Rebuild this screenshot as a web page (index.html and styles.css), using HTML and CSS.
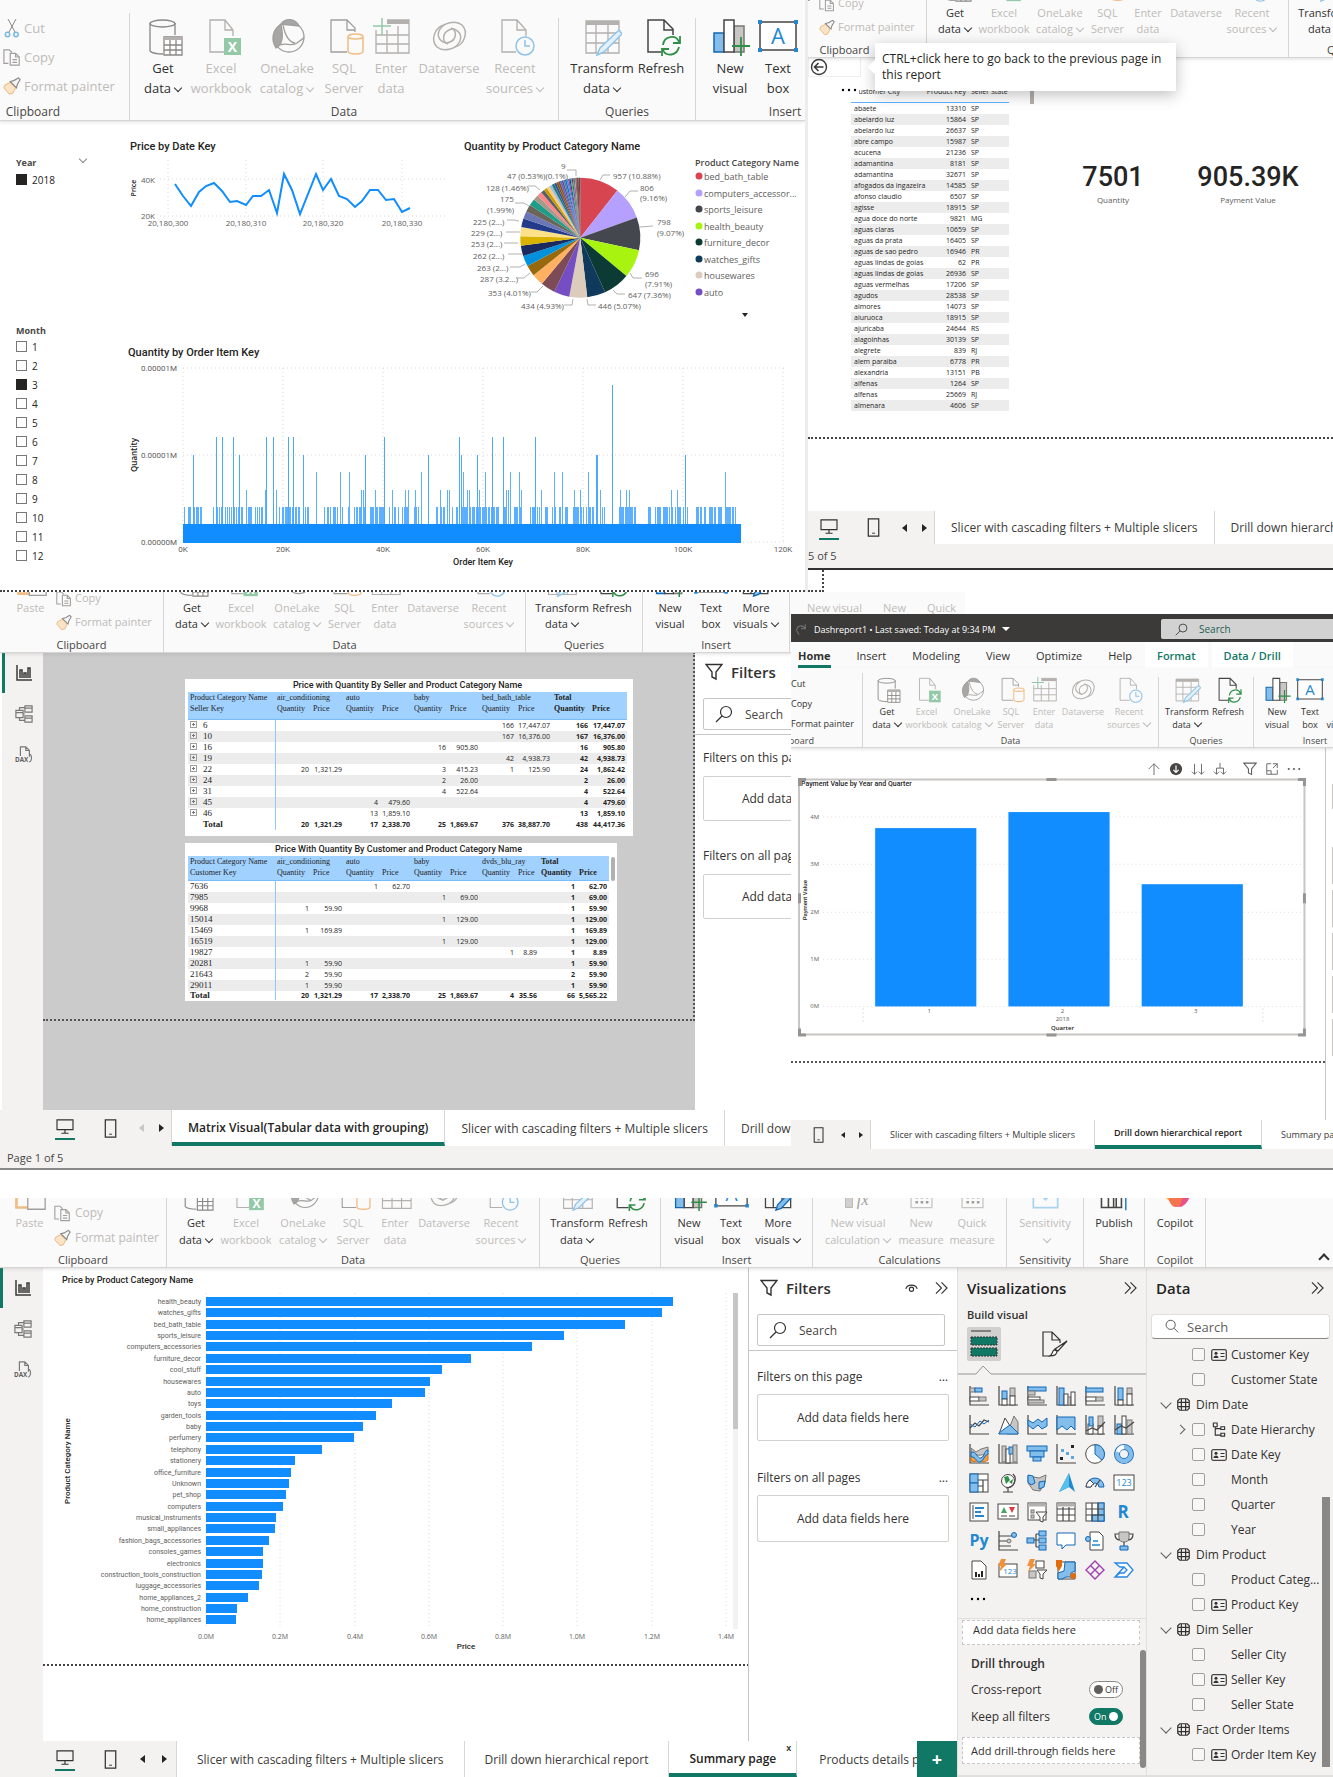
FILE: index.html
```html
<!DOCTYPE html>
<html lang="en">
<head>
<meta charset="utf-8">
<meta name="viewport" content="width=device-width, initial-scale=1">
<title>Dashreport1</title>
<link rel="stylesheet" href="styles.css">
</head>
<body>
<svg class="sprite" aria-hidden="true">
  <symbol id="i-cut" viewBox="0 0 16 20"><g fill="none" stroke="#8a8886"><path d="M4 1l7 13M12 1L5 14"/><g stroke="#7cb8e0" stroke-width="1.500"><circle cx="3.500" cy="16.500" r="2.200"/><circle cx="12" cy="16.500" r="2.200"/></g></g></symbol>
  <symbol id="i-copy" viewBox="0 0 20 20"><g fill="#fafafa" stroke="#a19f9d" stroke-width="1.300"><path d="M6 17H1V2h6l3 3"/><path d="M8 6h6l4 4v9H8zM14 6v4h4M10.500 13h5M10.500 16h5" /></g></symbol>
  <symbol id="i-brush" viewBox="0 0 20 20"><path d="M2 9l6-3 6 6-3 6-4 1L1 12z" fill="#fbe3c8" stroke="#e9b06f"/><path d="M8 5l4-1 5-3 2 2-3 5-1 4z" fill="#f6f6f6" stroke="#8a8886" stroke-width="1.300"/></symbol>
  <symbol id="i-paste" viewBox="-2 0 40 38"><path d="M3 4h26v30H3z" fill="none" stroke="#f0bd84" stroke-width="3"/><path d="M16 14h20v22H16z" fill="#fafafa" stroke="#a19f9d" stroke-width="1.500"/></symbol>
  <symbol id="i-get" viewBox="-2 0 40 38"><g fill="none" stroke="#8a8886" stroke-width="1.300"><path d="M5 5v28c2 2 8 3 13 3M30 5v12"/><ellipse cx="17.500" cy="5.500" rx="12.500" ry="3.500"/><path d="M19 19h18v18H19z" fill="#fff"/><path d="M19 20.500h18" stroke-width="3" stroke="#b3b0ad"/><path d="M25 22v15M31 22v15M19 27h18M19 32h18"/></g></symbol>
  <symbol id="i-excel" viewBox="-2 0 40 38"><path d="M30 18v-6L22 2H7v32h14M22 2v10h8" fill="none" stroke="#b3b0ad" stroke-width="1.300"/><path d="M21 20h17v17H21z" fill="#93c9a7"/><text x="29.500" y="34" text-anchor="middle" font-size="14" font-weight="700" fill="#fff">X</text></symbol>
  <symbol id="i-lake" viewBox="-2 0 40 38"><g fill="none" stroke="#a19f9d" stroke-width="1.300"><circle cx="20" cy="19" r="15"/><path d="M11 7C3 13 2 22 7 30c6-3 8-10 5-23z" fill="#a8a6a4"/><path d="M12 6c4-6 14-6 18 2-6-1-12-1-18-2z" fill="#a8a6a4"/><path d="M14 7c2 10 6 17 12 18M7 29c8-7 15 1 21-4 3-3 6-3 7-6"/></g></symbol>
  <symbol id="i-sql" viewBox="-2 0 40 38"><path d="M29 14v-4L21 2H5v32h16M21 2v10h8" fill="none" stroke="#a19f9d" stroke-width="1.300"/><g fill="#fafafa" stroke="#f0bd84" stroke-width="1.500"><path d="M22 19v14c0 4 15 4 15 0V19"/><ellipse cx="29.500" cy="18.500" rx="7.500" ry="2.500"/></g></symbol>
  <symbol id="i-enter" viewBox="-2 0 40 38"><g fill="none" stroke="#b3b0ad" stroke-width="1.300"><path d="M3 12v23h33V2H14M3 26h33M3 17h33M14 12v23M25 8v27"/><path d="M14 4h22" stroke-width="4"/></g><path d="M9 0v17M0 8h18" stroke="#93c9a7" stroke-width="1.500"/></symbol>
  <symbol id="i-verse" viewBox="-2 0 40 38"><g fill="none" stroke="#b3b0ad" stroke-width="1.500"><path d="M13 7C4 9-1 22 6 29c6 5 19 3 23-6 3-8-5-14-11-11-7 3-7 12-1 14"/><path d="M24 29c9-2 14-15 7-22-6-5-19-3-23 6-3 8 5 14 11 11 7-3 7-12 1-14"/></g></symbol>
  <symbol id="i-recent" viewBox="-2 0 40 38"><path d="M29 18v-6L20 2H5v32h14M20 2v10h9" fill="none" stroke="#b3b0ad" stroke-width="1.300"/><g fill="#fafafa" stroke="#8fc4e8" stroke-width="1.500"><circle cx="28" cy="28" r="9"/><path d="M28 22v6h5"/></g></symbol>
  <symbol id="i-transform" viewBox="-2 0 40 38"><g fill="none" stroke="#b3b0ad" stroke-width="1.300"><path d="M2 3h33v32H2zM2 15h33M2 25h33M12 7v28M24 7v28"/><path d="M2 5h33" stroke-width="4"/></g><path d="M35 12l3 4-18 18-7 3 3-7z" fill="#e3f0fa" stroke="#8fc4e8" stroke-width="1.500"/></symbol>
  <symbol id="i-refresh" viewBox="-2 0 40 38"><path d="M30 17v-6L21 2H5v32h13M21 2v10h9" fill="none" stroke="#484644" stroke-width="1.500"/><g fill="none" stroke="#2f8f46" stroke-width="1.800"><path d="M20 27c1-9 13-11 16-3M37 18v7h-7M36 29c-2 9-13 10-16 3M19 38v-7h7"/></g></symbol>
  <symbol id="i-newvis" viewBox="-2 0 40 38"><path d="M2 15h10v19H2z" fill="#83bdeb" stroke="#1267b4" stroke-width="1.500"/><path d="M22 8h10v26H22z" fill="#c8c6c4" stroke="#797775" stroke-width="1.500"/><path d="M12 2h10v32H12z" fill="#fff" stroke="#484644" stroke-width="1.500"/><path d="M29 19v19M20 28h18" stroke="#2f8f46" stroke-width="1.800"/></symbol>
  <symbol id="i-textbox" viewBox="-2 0 40 38"><path d="M0 4h36v28H0z" fill="#fff" stroke="#484644" stroke-width="1.500"/><path d="M-2 2h4v4h-4zM34 2h4v4h-4zM-2 30h4v4h-4zM34 30h4v4h-4z" fill="#2488d0"/><text x="18" y="26" text-anchor="middle" font-size="22" fill="#2488d0">A</text></symbol>
  <symbol id="i-more" viewBox="-2 0 40 38"><g fill="none" stroke="#484644" stroke-width="1.500"><path d="M3 14h9v20H3zM12 2h10v32H12zM22 8h10v26H22z"/></g><path d="M33 14l4 4-16 17-6 2 2-6z" fill="#83bdeb" stroke="#1267b4" stroke-width="1.500"/></symbol>
  <symbol id="i-calc" viewBox="-2 0 40 38"><path d="M3 8h8v26H3z" fill="#d2d0ce" stroke="#b3b0ad"/><text x="16" y="31" font-size="19" font-style="italic" font-family="Liberation Serif, serif" fill="#a19f9d">fx</text></symbol>
  <symbol id="i-measure" viewBox="-2 0 40 38"><path d="M6 4h24v30H6z" fill="none" stroke="#c8c6c4" stroke-width="1.500"/><path d="M6 10h24" stroke="#c8c6c4" stroke-width="4"/><path d="M11 22h3M17 22h3M23 22h3M11 28h3M17 28h3M23 28h3" stroke="#a19f9d" stroke-width="3"/></symbol>
  <symbol id="i-sens" viewBox="-2 0 40 38"><path d="M4 6h28v28H4z" fill="none" stroke="#a9d3ef" stroke-width="2"/><path d="M11 18l7 7 7-7" fill="none" stroke="#a9d3ef" stroke-width="2"/></symbol>
  <symbol id="i-publish" viewBox="-2 0 40 38"><path d="M3 8v26h24M11 34V18h6v16M20 34V10h6v24" fill="none" stroke="#484644" stroke-width="1.800"/><path d="M31 37V14M25 21l6-7 6 7" fill="none" stroke="#2488d0" stroke-width="1.800"/></symbol>
  <symbol id="i-copilot" viewBox="-2 0 40 38"><path d="M0 6h11l8 18c2 4 0 6-3 5C8 27 2 18 0 6z" fill="#f6c13e"/><path d="M20 6h17c1 12-5 24-12 27h-9c6-2 6-8 5-14z" fill="#e8508c"/><path d="M9 20h18l-3 10c-1 3-4 3-8 3-4-2-6-8-7-13z" fill="#f5734f"/></symbol>
  <symbol id="i-report" viewBox="0 0 18 18"><path d="M2 1v15h15M5 14V6h2v8M9 14V9h2v5M13 14V4h2v10" fill="none" stroke="#3b3a39" stroke-width="1.500"/></symbol>
  <symbol id="i-model" viewBox="0 0 20 20"><path d="M11 1h8v7h-8zM11 12h8v7h-8zM1 6h8v8H1zM11 3.500h8M11 14.500h8M1 8.500h8M9 10h2M5 6V3h6M5 14v3h6" fill="none" stroke="#7a7876" stroke-width="1.300"/></symbol>
  <symbol id="i-dax" viewBox="0 0 20 20"><path d="M6 11V1h6l4 4v7M12 1v4h4M17 9c2 3 2 7-1 9" fill="none" stroke="#7a7876" stroke-width="1.300"/><text x="0" y="18" font-size="7" font-weight="700" fill="#605e5c">DAX</text></symbol>
  <symbol id="i-monitor" viewBox="0 0 20 18"><path d="M1 1h18v11H1zM10 12v4M6 16h8" fill="none" stroke="#323130" stroke-width="1.300"/></symbol>
  <symbol id="i-phone" viewBox="0 0 14 20"><path d="M1 1h11v18H1z" fill="none" stroke="#323130" stroke-width="1.300"/><path d="M5 16h3" stroke="#323130"/></symbol>
  <symbol id="i-funnel" viewBox="0 0 18 18"><path d="M1 1.500h16l-6 7.500v7l-4-2V9z" fill="none" stroke="currentColor" stroke-width="1.400"/></symbol>
  <symbol id="i-search" viewBox="0 0 18 18"><circle cx="11" cy="7" r="5.500" fill="none" stroke="currentColor" stroke-width="1.200"/><path d="M7 11l-6 6" stroke="currentColor" stroke-width="1.200"/></symbol>
  <symbol id="i-searchr" viewBox="0 0 18 18"><circle cx="8" cy="7" r="5.500" fill="none" stroke="currentColor" stroke-width="1.200"/><path d="M12 11l5 5" stroke="currentColor" stroke-width="1.200"/></symbol>
  <symbol id="i-eye" viewBox="0 0 16 12"><path d="M1 7C3 1 13 1 15 7" fill="none" stroke="#323130" stroke-width="1.400"/><circle cx="8" cy="7.500" r="2.600" fill="none" stroke="#323130" stroke-width="1.400"/></symbol>
  <symbol id="i-dbl" viewBox="0 0 14 14"><path d="M1 1l6 6-6 6M7 1l6 6-6 6" fill="none" stroke="#323130" stroke-width="1.200"/></symbol>
  <symbol id="i-back" viewBox="0 0 18 18"><circle cx="9" cy="9" r="7.500" fill="none" stroke="#3b3a39" stroke-width="1.400"/><path d="M13.500 9H5M8.500 5L4.500 9l4 4" fill="none" stroke="#3b3a39" stroke-width="1.600"/></symbol>
  <symbol id="i-redo" viewBox="0 0 14 14"><path d="M12 1v5H7M12 6C9 1 2 2 2 8c0 2 1 3 3 5" fill="none" stroke="#777573" stroke-width="1.200"/></symbol>
  <symbol id="i-up" viewBox="0 0 16 16"><path d="M8 15V2M2 8l6-6 6 6" fill="none" stroke="#605e5c"/></symbol>
  <symbol id="i-down" viewBox="0 0 16 16"><circle cx="8" cy="8" r="7" fill="#484644"/><path d="M8 4v8M5 9l3 3 3-3" fill="none" stroke="#fff" stroke-width="1.400"/></symbol>
  <symbol id="i-downs" viewBox="0 0 16 16"><path d="M4 2v12M1 11l3 3 3-3M12 2v12M9 11l3 3 3-3" fill="none" stroke="#605e5c"/></symbol>
  <symbol id="i-split" viewBox="0 0 16 16"><path d="M8 1v6M4 14V7h8v7M1 11l3 3 3-3M9 11l3 3 3-3" fill="none" stroke="#605e5c"/></symbol>
  <symbol id="i-focus" viewBox="0 0 16 16"><path d="M7 2H2v12h12V9M2 10h5v4M9 2h5v5M14 2L9 7" fill="none" stroke="#605e5c"/></symbol>
  <symbol id="i-dots" viewBox="0 0 16 4"><circle cx="2" cy="2" r="1.200"/><circle cx="8" cy="2" r="1.200"/><circle cx="14" cy="2" r="1.200"/></symbol>
  <symbol id="i-card" viewBox="0 0 16 12"><rect x=".7" y=".7" width="14.600" height="10.600" rx="1.500" fill="none" stroke="#484644" stroke-width="1.300"/><circle cx="5" cy="4.300" r="1.500" fill="#323130"/><path d="M2.500 9c0-3.500 5-3.500 5 0z" fill="#323130"/><path d="M9.500 4.500h4M9.500 7.500h4" stroke="#323130" stroke-width="1.200"/></symbol>
  <symbol id="i-table" viewBox="0 0 14 14"><path d="M3 .8h8L13.200 3v8L11 13.200H3L.8 11V3zM4.700 1v12M9.300 1v12M1 4.700h12M1 9.300h12" fill="none" stroke="#323130" stroke-width="1.300"/></symbol>
  <symbol id="i-tree" viewBox="0 0 14 16"><path d="M1 1h4v4H1zM9 5h4v3H9zM9 12h4v3H9zM3 5v9h6M3 7h6" fill="none" stroke="#323130" stroke-width="1.200"/></symbol>
  <symbol id="i-fields" viewBox="0 0 34 34"><path d="M4 4h20" stroke="#323130"/><path d="M4 10h26v8H4zM4 21h26v8H4z" fill="#117865" stroke="#323130" stroke-dasharray="2 1"/></symbol>
  <symbol id="i-page" viewBox="0 0 28 28"><path d="M9 26H2V2h9l8 8v3M11 2v8h8" fill="none" stroke="#323130" stroke-width="1.200"/><path d="M26 11l-9 10-3-2zM16 21c0 4-3 5-7 5 3-2 2-5 4-6z" fill="#fff" stroke="#323130" stroke-width="1.200"/></symbol>
</svg>

<main class="board">
  <div class="row row-top">
    <section class="window" aria-label="Slicers report">
      <div class="ribbon ribbon-lg" data-groups="clipboardAll data queries insert"></div>
      <div class="split slicer-body">
        <aside class="slicers">
          <fieldset class="slicer" data-slicer="Year" data-values="2018" data-picked="2018"></fieldset>
          <fieldset class="slicer slicer-month" data-slicer="Month" data-values="1 2 3 4 5 6 7 8 9 10 11 12" data-picked="3"></fieldset>
        </aside>
        <svg class="chart" id="slicer-charts" viewBox="125 120 680 470" role="img" aria-label="Price, quantity by category and quantity by order item"></svg>
      </div>
    </section>

    <section class="window window-drillthrough" aria-label="Products details report">
      <div class="ribbon ribbon-md ribbon-shifted" data-groups="clipboard data queries"></div>
      <div class="tooltip" role="tooltip">CTRL+click here to go back to the previous page in this report</div>
      <div class="details">
        <button class="back" aria-label="Back"><svg><use href="#i-back"/></svg></button>
        <div class="details-body">
          <button class="visual-dots" aria-label="More options"><svg><use href="#i-dots"/></svg></button>
          <table class="cities" id="cities"><thead><tr><th>Customer City</th><th>Product Key</th><th>Seller State</th></tr></thead><tbody></tbody></table>
          <span class="thumb"></span>
          <div class="kpi"><strong>7501</strong><span>Quantity</span></div>
          <div class="kpi kpi-wide"><strong>905.39K</strong><span>Payment Value</span></div>
        </div>
      </div>
      <div class="blank"></div>
      <nav class="tabs">
        <div class="views views-b"><button aria-label="Desktop layout" class="on"><svg class="mon"><use href="#i-monitor"/></svg></button><button aria-label="Mobile layout"><svg class="pho"><use href="#i-phone"/></svg></button><button class="arrow prev" aria-label="Previous"></button><button class="arrow next" aria-label="Next"></button></div>
        <button class="tab">Slicer with cascading filters + Multiple slicers</button>
        <button class="tab">Drill down hierarchical report</button>
      </nav>
      <div class="status status-cut">5 of 5</div>
      <div class="seam"></div>
    </section>
  </div>

  <div class="row row-mid">
    <section class="window" aria-label="Matrix report">
      <div class="ribbon ribbon-md" data-groups="clipboard data queries insert3"></div>
      <div class="split matrix-body">
        <nav class="rail rail-inset"><button aria-label="Report view" class="on"><svg><use href="#i-report"/></svg></button><button aria-label="Model view"><svg><use href="#i-model"/></svg></button><button aria-label="DAX view"><svg><use href="#i-dax"/></svg></button></nav>
        <div class="grey">
          <div class="grey-page">
            <div class="matrix-card"><h2>Price with Quantity By Seller and Product Category Name</h2><table class="matrix" id="m-seller"></table></div>
            <div class="matrix-card matrix-card-b"><h2>Price With Quantity By Customer and Product Category Name</h2><table class="matrix" id="m-customer"></table><span class="thumb"></span></div>
          </div>
        </div>
        <aside class="filters filters-cut">
          <header><svg class="funnel"><use href="#i-funnel"/></svg><h2>Filters</h2></header>
          <label class="search"><svg><use href="#i-search"/></svg><input type="text" placeholder="Search" aria-label="Search filters"></label>
          <hr>
          <h3>Filters on this page</h3><div class="well">Add data fields here</div>
          <h3>Filters on all pages</h3><div class="well">Add data fields here</div>
        </aside>
      </div>
      <nav class="tabs tabs-tall">
        <div class="views views-c"><button aria-label="Desktop layout" class="on"><svg class="mon"><use href="#i-monitor"/></svg></button><button aria-label="Mobile layout"><svg class="pho"><use href="#i-phone"/></svg></button><button class="arrow prev" disabled aria-label="Previous"></button><button class="arrow next" aria-label="Next"></button></div>
        <button class="tab active">Matrix Visual(Tabular data with grouping)</button>
        <button class="tab">Slicer with cascading filters + Multiple slicers</button>
        <button class="tab">Drill down hierarchical report</button>
      </nav>
      <div class="status">Page 1 of 5</div>
    </section>

    <section class="window" aria-label="Drill down report">
      <div class="sliver"><span>New visual</span><span>New</span><span>Quick</span></div>
      <div class="titlebar"><svg><use href="#i-redo"/></svg><span>Dashreport1 • Last saved: Today at 9:34 PM</span><i class="caret"></i><label class="title-search"><svg><use href="#i-search"/></svg><input type="text" placeholder="Search" aria-label="Search commands"></label></div>
      <nav class="menu"><a href="#home" class="active">Home</a><a href="#insert">Insert</a><a href="#modeling">Modeling</a><a href="#view">View</a><a href="#optimize">Optimize</a><a href="#help">Help</a><a href="#format" class="ctx">Format</a><a href="#drill" class="ctx">Data / Drill</a></nav>
      <div class="ribbon ribbon-sm" data-groups="clipboardOn data queries insert3"></div>
      <div class="split drill-body">
        <div class="drill-canvas">
          <div class="toolbar"><button aria-label="Drill up"><svg><use href="#i-up"/></svg></button><button aria-label="Drill mode"><svg><use href="#i-down"/></svg></button><button aria-label="Next level"><svg><use href="#i-downs"/></svg></button><button aria-label="Expand all"><svg><use href="#i-split"/></svg></button><button aria-label="Filters" class="apart"><svg><use href="#i-funnel"/></svg></button><button aria-label="Focus mode"><svg><use href="#i-focus"/></svg></button><button aria-label="More options"><svg><use href="#i-dots"/></svg></button></div>
          <svg class="chart" id="quarter-chart" viewBox="791 776 533 262" role="img" aria-label="Payment Value by Year and Quarter"></svg>
        </div>
        <aside class="stub"><i class="stub-search"></i><i></i><i></i><i></i><i></i><i></i></aside>
      </div>
      <nav class="tabs tabs-small">
        <div class="views views-d"><button aria-label="Mobile layout"><svg class="pho"><use href="#i-phone"/></svg></button><button class="arrow prev" aria-label="Previous"></button><button class="arrow next" aria-label="Next"></button></div>
        <button class="tab">Slicer with cascading filters + Multiple slicers</button>
        <button class="tab active">Drill down hierarchical report</button>
        <button class="tab">Summary page</button>
      </nav>
      <div class="status status-small"></div>
    </section>
  </div>

  <section class="window row-bottom" aria-label="Summary report">
    <div class="ribbon ribbon-wd" data-groups="clipboard data queries insert3 calc sens share copilot"></div>
    <div class="split summary">
      <div class="summary-left">
        <div class="split summary-main">
          <nav class="rail"><button aria-label="Report view" class="on"><svg><use href="#i-report"/></svg></button><button aria-label="Model view"><svg><use href="#i-model"/></svg></button><button aria-label="DAX view"><svg><use href="#i-dax"/></svg></button></nav>
          <svg class="chart" id="category-chart" viewBox="43 1267 705 472" role="img" aria-label="Price by Product Category Name"></svg>
          <aside class="filters">
            <header><svg class="funnel"><use href="#i-funnel"/></svg><h2>Filters</h2><button class="end" aria-label="Hide"><svg class="eye"><use href="#i-eye"/></svg></button><button aria-label="Collapse"><svg class="dbl"><use href="#i-dbl"/></svg></button></header>
            <label class="search"><svg><use href="#i-search"/></svg><input type="text" placeholder="Search" aria-label="Search filters"></label>
            <hr>
            <h3>Filters on this page<span>…</span></h3><div class="well">Add data fields here</div>
            <h3>Filters on all pages<span>…</span></h3><div class="well">Add data fields here</div>
          </aside>
        </div>
        <nav class="tabs tabs-tall tabs-end">
          <div class="views views-e"><button aria-label="Desktop layout" class="on"><svg class="mon"><use href="#i-monitor"/></svg></button><button aria-label="Mobile layout"><svg class="pho"><use href="#i-phone"/></svg></button><button class="arrow prev" aria-label="Previous"></button><button class="arrow next" aria-label="Next"></button></div>
          <button class="tab">Slicer with cascading filters + Multiple slicers</button>
          <button class="tab">Drill down hierarchical report</button>
          <button class="tab active">Summary page<span class="close">x</span></button>
          <button class="tab last">Products details page</button>
          <button class="add" aria-label="New page">+</button>
        </nav>
      </div>
      <aside class="pane viz">
        <header><h2>Visualizations</h2><button aria-label="Collapse"><svg class="dbl"><use href="#i-dbl"/></svg></button></header>
        <h3>Build visual</h3>
        <div class="modes"><button class="on" aria-label="Build visual"><svg><use href="#i-fields"/></svg></button><button aria-label="Format page"><svg><use href="#i-page"/></svg></button></div>
        <svg class="notch" viewBox="0 0 188 10" preserveAspectRatio="xMinYMin slice" aria-hidden="true"><path d="M0 9h18l7-8 8 8h155" fill="none" stroke="#979593"/></svg>
        <div class="gallery" id="gallery"></div>
        <button class="viz-more" aria-label="More visuals"><svg><use href="#i-dots"/></svg></button>
        <div class="viz-fields">
          <div class="drop">Add data fields here</div>
          <h4>Drill through</h4>
          <div class="option"><span>Cross-report</span><label class="switch"><input type="checkbox" aria-label="Cross-report"><span>Off</span></label></div>
          <div class="option"><span>Keep all filters</span><label class="switch"><input type="checkbox" checked aria-label="Keep all filters"><span>On</span></label></div>
          <div class="drop drop-b">Add drill-through fields here</div>
          <span class="thumb"></span>
        </div>
      </aside>
      <aside class="pane data">
        <header><h2>Data</h2><button aria-label="Collapse"><svg class="dbl"><use href="#i-dbl"/></svg></button></header>
        <label class="data-search"><svg><use href="#i-searchr"/></svg><input type="text" placeholder="Search" aria-label="Search data"></label>
        <ul class="fields" id="fields"></ul>
        <span class="thumb"></span>
      </aside>
    </div>
  </section>
</main>
<script src="app.js"></script>
</body>
</html>
```

FILE: styles.css
```css
* { box-sizing: border-box; }
body { margin: 0; background: #fff; color: #252423; font-family: "Open Sans", "Noto Sans", sans-serif; font-size: 11px; overflow-x: hidden; }
button { font: inherit; color: inherit; background: none; border: 0; padding: 0; margin: 0; }
input { font: inherit; color: inherit; margin: 0; }
h2, h3, h4 { margin: 0; font-weight: 600; }
svg { display: block; }
.sprite { position: absolute; width: 0; height: 0; }
.board { display: flex; flex-direction: column; }
.row { display: grid; }
.row-top { grid-template-columns: minmax(0, 805fr) minmax(0, 528fr); }
.row-mid { grid-template-columns: minmax(0, 791fr) minmax(0, 542fr); margin-bottom: 28px; }
.window { min-width: 0; overflow: hidden; display: flex; flex-direction: column; position: relative; }
.row-top .window:first-child { border-bottom: 2px dotted #444; }
.split { display: flex; min-width: 0; }
.chart { flex: 1; width: 100%; min-width: 0; overflow: hidden; }
.chart text { dominant-baseline: central; }

/* ribbon */
.ribbon { display: flex; align-items: flex-end; overflow: hidden; background: #fafafa; box-shadow: 0 1px 1px #d8d6d4, 0 2px 4px rgba(0, 0, 0, .12); position: relative; z-index: 1; flex: none; }
.group { flex: none; border-right: 1px solid #d8d6d4; display: flex; flex-direction: column; justify-content: flex-end; }
.group-name { text-align: center; color: #484644; }
.group-items { display: grid; }
.cmd { display: flex; flex-direction: column; align-items: center; justify-content: flex-end; white-space: nowrap; color: #323130; }
.cmd span { display: block; }
.cmd:disabled, .mini:disabled { color: #bebbb8; }
.more::after { content: ""; display: inline-block; width: 5px; height: 5px; margin: 0 1px 2px 4px; border: solid currentColor; border-width: 0 1px 1px 0; transform: rotate(45deg); }
.minis { display: flex; flex-direction: column; justify-content: flex-end; margin-bottom: -2px; }
.mini { display: flex; align-items: center; white-space: nowrap; color: #323130; }

.ribbon-lg { height: 120px; font-size: 13px; line-height: 20px; }
.ribbon-lg .cmd svg { width: 40px; height: 38px; margin-bottom: 2px; }
.ribbon-lg .group-name { font-size: 12px; line-height: 16px; margin-top: 6px; }
.ribbon-lg .mini { height: 29px; gap: 3px; }
.ribbon-lg .mini svg { width: 18px; height: 20px; }
.ribbon-lg .g-clipboardAll { width: 193px; margin-left: -63px; }
.ribbon-lg .g-clipboardAll .group-items { padding-left: 66px; }
.ribbon-lg .g-data .group-items { grid-template-columns: 52px 64px 68px 46px 48px 68px 64px; padding: 0 11px 0 7px; }
.ribbon-lg .g-queries .group-items { grid-template-columns: 66px 52px; padding: 0 8px 0 10px; }
.ribbon-lg .g-insert .group-items { grid-template-columns: 44px 52px; padding: 0 70px 0 12px; }

.ribbon-md { height: 60px; font-size: 11px; line-height: 16px; }
.ribbon-md.ribbon-shifted { height: 57px; }
.ribbon-md .cmd svg { width: 34px; height: 32px; margin-bottom: 3px; }
.ribbon-md .group-name { font-size: 11px; line-height: 14px; margin-top: 6px; }
.ribbon-md .mini { height: 24px; gap: 3px; }
.ribbon-md .mini svg { width: 16px; height: 17px; }
.ribbon-md .g-clipboard { width: 164px; }
.ribbon-shifted .g-clipboard { margin-left: -45px; }
.ribbon-md .g-clipboard .group-items { grid-template-columns: 51px 1fr; padding-left: 5px; }
.ribbon-md .g-data .group-items { grid-template-columns: 44px 54px 58px 37px 44px 52px 60px; padding: 0 6px; }
.ribbon-md .g-queries .group-items { grid-template-columns: 56px 44px; padding: 0 8px; }
.ribbon-md .g-insert3 .group-items { grid-template-columns: 36px 46px 44px; padding: 0 11px 0 9px; }

.ribbon-sm { height: 79px; font-size: 9px; line-height: 13px; }
.ribbon-sm .cmd svg { width: 28px; height: 26px; margin-bottom: 2px; }
.ribbon-sm .group-name { font-size: 9px; line-height: 12px; margin-top: 4px; }
.ribbon-sm .mini { height: 20px; gap: 3px; }
.ribbon-sm .mini svg { width: 14px; height: 14px; }
.ribbon-sm .g-clipboardOn { width: 138px; margin-left: -66px; }
.ribbon-sm .g-clipboardOn .group-items { padding-left: 49px; }
.ribbon-sm .g-data .group-items { grid-template-columns: 36px 43px 48px 30px 36px 42px 50px; padding: 0 4px 0 6px; }
.ribbon-sm .g-queries .group-items { grid-template-columns: 44px 38px; padding: 0 6px; }
.ribbon-sm .g-insert3 .group-items { grid-template-columns: 30px 36px 36px; padding: 0 12px 0 8px; }

.ribbon-wd { height: 69px; font-size: 12px; line-height: 17px; }
.ribbon-wd .cmd svg { width: 35px; height: 33px; margin-bottom: 3px; }
.ribbon-wd .group-name { font-size: 11px; line-height: 14px; margin-top: 5px; }
.ribbon-wd .mini { height: 25px; gap: 4px; }
.ribbon-wd .mini svg { width: 17px; height: 18px; }
.ribbon-wd .g-clipboard { width: 167px; }
.ribbon-wd .g-clipboard .group-items { grid-template-columns: 49px 1fr; padding-left: 5px; }
.ribbon-wd .g-data .group-items { grid-template-columns: 46px 54px 60px 40px 44px 54px 60px; padding: 0 8px 0 6px; }
.ribbon-wd .g-queries .group-items { grid-template-columns: 58px 44px; padding: 0 10px 0 8px; }
.ribbon-wd .g-insert3 .group-items { grid-template-columns: 36px 48px 46px; padding: 0 11px 0 10px; }
.ribbon-wd .g-calc .group-items { grid-template-columns: 74px 52px 50px; padding: 0 9px 0 8px; }
.ribbon-wd .g-sens .group-items { grid-template-columns: 76px; }
.ribbon-wd .g-share .group-items, .ribbon-wd .g-copilot .group-items { grid-template-columns: 60px; }
.ribbon-wd .cmd { font-size: 11px; }
.fold { margin: 0 5px 4px auto; width: 8px; height: 8px; border: solid #323130; border-width: 2px 0 0 2px; transform: rotate(45deg); }

/* slicer report */
.slicers { width: 125px; flex: none; padding: 36px 0 0 16px; }
.slicer-body { background: #fff; }
.slicer { border: 0; margin: 0; padding: 0; min-width: 0; font-size: 10px; position: relative; }
.slicer legend { padding: 0; font-size: 9px; font-weight: 700; line-height: 14px; color: #484644; display: flex; justify-content: space-between; width: 70px; }
.slicer label { display: flex; align-items: center; gap: 5px; height: 19px; }
.slicer input { appearance: none; width: 11px; height: 11px; border: 1px solid #7a7876; background: #fff; }
.slicer input:checked { background: #252423; border-color: #252423; }
.slicer[data-slicer="Year"] legend::after { content: ""; width: 5px; height: 5px; border: solid #8a8886; border-width: 0 1px 1px 0; transform: rotate(45deg); }
.slicer-month { margin-top: 135px; }
.slicer-month legend { line-height: 13px; }

/* drill-through report */
.window-drillthrough { border-left: 3px solid #ececec; }
.tooltip { position: absolute; z-index: 3; left: 67px; top: 43px; width: 301px; padding: 8px 7px; font-size: 12px; line-height: 16px; background: #fff; box-shadow: 0 4px 14px rgba(0, 0, 0, .25); }
.tooltip::before { content: ""; position: absolute; left: -8px; top: 16px; border: solid transparent; border-width: 8px 9px 8px 0; border-right-color: #fff; }
.details { border-bottom: 2px dotted #444; min-height: 382px; }
.back { display: block; width: 53px; height: 20px; border: 1px solid #eee; border-top: 0; padding-left: 1px; }
.back svg { width: 18px; height: 18px; }
.details-body { display: flex; padding-left: 43px; position: relative; }
.visual-dots { position: absolute; left: 31px; top: 7px; z-index: 1; background: #fff; padding: 4px 2px; }
.visual-dots svg { width: 16px; height: 4px; }
.cities { border-collapse: collapse; table-layout: fixed; width: 158px; flex: none; font-size: 7px; line-height: 11px; white-space: nowrap; margin-top: 5px; }
.cities th { font-weight: 400; text-align: left; height: 20px; border-bottom: 1px solid #5fb1ff; padding: 0 0 0 3px; line-height: 20px; }
.cities th:nth-child(1), .cities td:nth-child(1) { width: 74px; }
.cities th:nth-child(2), .cities td:nth-child(2) { width: 43px; text-align: right; padding: 0 2px 0 0; }
.cities td { padding: 0 0 0 3px; height: 11px; }
.cities tr:nth-child(even) td { background: #ececec; }
.details-body .thumb { width: 4px; height: 27px; background: #b3b0ad; margin-left: 21px; flex: none; }
.kpi { width: 100px; margin: 83px 0 0 29px; text-align: center; display: flex; flex-direction: column; font-size: 8px; color: #605e5c; }
.kpi-wide { width: 130px; margin-left: 20px; }
.kpi strong { font: 500 27px/34px Roboto, sans-serif; color: #252423; }
.blank { height: 72px; background: #fff; }
.seam { width: 16px; height: 22px; border: dotted #444; border-width: 0 2px 2px 0; }

/* page tabs */
.tabs { display: flex; height: 33px; background: #f3f2f1; overflow: hidden; flex: none; font-size: 12px; color: #3b3a39; }
.tabs-tall { height: 36px; }
.tabs-small { height: 29px; font-size: 9px; }
.tab { flex: none; padding: 0 16px; background: #fff; border-right: 1px solid #d8d6d4; white-space: nowrap; position: relative; }
.tab.active { font-weight: 600; color: #252423; border-bottom: 4px solid #117865; padding-top: 3px; }
.tabs-small .tab { padding: 0 19px; }
.tabs-end .tab { padding-left: 20px; padding-right: 20px; }
.views { display: flex; flex: none; align-items: center; border-right: 1px solid #d8d6d4; }
.views button { display: grid; place-items: center; height: 24px; }
.views .mon { width: 20px; height: 16px; }
.views .pho { width: 14px; height: 19px; }
.views .on { border-bottom: 2px solid #117865; }
.arrow { width: 22px; }
.arrow::before { content: ""; border: solid transparent; border-width: 4px 5px; }
.prev::before { border-right-color: #252423; border-left-width: 0; }
.next::before { border-left-color: #252423; border-right-width: 0; }
.prev:disabled::before { border-right-color: #c8c6c4; }
.views-b { width: 127px; padding-left: 11px; }
.views-b button:nth-child(2) { margin: 0 13px 0 28px; }
.views-c { width: 172px; padding-left: 55px; }
.views-c button:nth-child(2), .views-e button:nth-child(2) { margin: 0 13px 0 29px; }
.views-e { width: 177px; padding-left: 55px; }
.views-d { width: 80px; padding-left: 22px; }
.views-d .pho { width: 12px; height: 16px; }
.views-d button:first-child { margin-right: 9px; }
.views-d .arrow { width: 18px; }
.views-d .arrow::before { border-width: 3px 4px; }
.views-d .prev::before { border-left-width: 0; }
.views-d .next::before { border-right-width: 0; }
.close { position: absolute; right: 5px; top: 0; font-size: 9px; }
.tabs-end .last { flex: 1; min-width: 0; overflow: hidden; text-align: left; border: 0; padding: 0 0 0 22px; }
.add { width: 40px; flex: none; background: #117865; color: #fff; font-size: 18px; font-weight: 700; }
.status { height: 24px; line-height: 24px; padding-left: 7px; background: #f3f2f1; border-bottom: 2px solid #8a8886; color: #484644; }
.status-cut { height: 26px; padding-left: 0; border-bottom-color: #323130; }
.status-small { height: 21px; }

/* matrix report */
.rail { width: 43px; flex: none; background: #f3f2f1; display: flex; flex-direction: column; }
.rail button { height: 41px; display: grid; place-items: center; border-left: 3px solid transparent; }
.rail .on { border-left-color: #117865; }
.rail svg { width: 18px; height: 18px; }
.rail-inset { border-left: 2px solid #fff; }
.matrix-body { height: 458px; }
.grey { flex: 1; background: #cbcbcb; min-width: 0; }
.grey-page { border: dotted #555; border-width: 0 2px 2px 0; height: 369px; padding: 27px 0 0 142px; display: flex; flex-direction: column; align-items: flex-start; gap: 7px; }
.matrix-card { background: #fff; padding: 0 6px 6px 3px; position: relative; }
.matrix-card-b { padding: 0 8px 1px 3px; }
.matrix-card h2 { font: 500 9px/13px Roboto, sans-serif; text-align: center; white-space: nowrap; }
.matrix-card .thumb { position: absolute; right: 2px; top: 14px; width: 4px; height: 24px; border-radius: 2px; background: #b3b0ad; }
.matrix { border-collapse: collapse; table-layout: fixed; width: 439px; font-size: 7px; line-height: 11px; white-space: nowrap; }
#m-customer { width: 421px; }
.matrix th, .matrix td { padding: 0 2px; height: 11px; text-align: right; }
.matrix thead th { background: #a0d1ff; font: 400 8px/11px "Liberation Serif", serif; text-align: left; overflow: visible; }
.matrix thead tr:last-child th { height: 16px; vertical-align: top; border-bottom: 1px solid #79bcf7; }
#m-customer thead tr:last-child th { height: 14px; }
.matrix tbody th { font: 400 9px/11px "Liberation Serif", serif; text-align: left; border-right: 1px solid #8fc9fb; }
#m-customer .total th, #m-customer .total td { height: 9px; line-height: 9px; }
.matrix .strong, .matrix thead .strong, .matrix .total th, .matrix .total td { font-weight: 700; }
.matrix tbody tr:nth-child(even):not(.total) > * { background: #ececec; }
.plus { display: inline-block; width: 7px; height: 7px; border: 1px solid #a19f9d; margin-right: 6px; background: linear-gradient(#797775, #797775) center / 3px 1px no-repeat, linear-gradient(#797775, #797775) center / 1px 3px no-repeat; }
.indent { display: inline-block; width: 13px; }

/* filter pane */
.filters { width: 209px; flex: none; border-left: 1px solid #c8c6c4; background: #fff; color: #323130; font-size: 12px; white-space: nowrap; overflow: hidden; }
.filters header { display: flex; align-items: center; height: 41px; padding: 0 9px 0 11px; gap: 8px; }
.filters header h2 { font-size: 15px; }
.funnel { width: 18px; height: 18px; }
.end { margin-left: auto; }
.eye { width: 13px; height: 10px; }
.dbl { width: 13px; height: 14px; }
.filters header button + button { margin-left: 9px; }
.search { display: flex; align-items: center; gap: 12px; height: 32px; margin: 6px 12px 0 8px; padding-left: 11px; border: 1px solid #c8c6c4; border-radius: 2px; }
.search svg { width: 18px; height: 18px; flex: none; }
.search input { border: 0; width: 100%; min-width: 0; padding: 0; }
.search input::placeholder { color: #484644; }
.filters hr { border: 0; border-top: 1px solid #c8c6c4; margin: 4px 0 18px; }
.filters h3 { font-size: 12px; font-weight: 400; line-height: 16px; padding: 0 9px 0 8px; display: flex; justify-content: space-between; }
.well { border: 1px solid #d2d0ce; border-radius: 2px; height: 47px; margin: 9px 8px 29px; display: grid; place-items: center; }
.filters-cut { width: 96px; border-left: 0; }
.filters-cut header { height: 40px; padding-left: 10px; }
.filters-cut .search { margin: 6px -90px 0 8px; }
.filters-cut hr { margin-bottom: 15px; }
.filters-cut .well { width: 190px; height: 45px; margin: 10px 0 27px 8px; }

/* drill-down report */
.sliver { height: 22px; width: 174px; background: #fafafa; display: flex; gap: 21px; padding: 8px 0 0 16px; color: #bebbb8; line-height: 16px; white-space: nowrap; }
.titlebar { height: 28px; background: #3b3a39; color: #fff; font-size: 9px; display: flex; align-items: center; padding: 2px 0 0 4px; white-space: nowrap; }
.titlebar > svg { width: 12px; height: 13px; margin-right: 7px; }
.titlebar label svg { width: 13px; height: 13px; }
.caret { border: 4px solid transparent; border-top-color: #fff; border-bottom: 0; margin-left: 6px; }
.title-search { margin-left: auto; flex: none; width: 172px; height: 20px; background: #d2d2d2; color: #3b3a39; display: flex; align-items: center; gap: 11px; padding-left: 14px; border-radius: 2px 0 0 2px; }
.title-search input { background: none; border: 0; width: 90px; padding: 0; font-size: 10px; }
.title-search input::placeholder { color: #1f6052; }
.menu { display: flex; height: 26px; background: #fafafa; font-size: 11px; }
.menu a { color: #323130; text-decoration: none; line-height: 28px; margin-left: 26px; white-space: nowrap; }
.menu a.active { margin-left: 7px; font-weight: 700; border-bottom: 3px solid #117865; }
.menu a.ctx { color: #117865; font-weight: 600; background: #fff; padding: 0 12px; margin-left: 13px; }
.menu a.ctx + .ctx { margin-left: 4px; }
.drill-canvas { flex: 1; min-width: 0; }
.drill-body { height: 373px; }
.toolbar { display: flex; justify-content: flex-end; align-items: flex-end; height: 29px; padding-right: 20px; }
.toolbar button { width: 22px; height: 14px; display: grid; place-items: center; color: #605e5c; }
.toolbar svg { width: 14px; height: 14px; fill: #605e5c; }
.toolbar .apart { margin-left: 8px; }
.drill-canvas::after { content: ""; display: block; border-bottom: 2px dotted #555; height: 23px; }
.stub { width: 8px; flex: none; border-left: 1px solid #c8c6c4; padding: 37px 0 0 6px; }
.stub i { display: block; height: 37px; border: 1px solid #c8c6c4; border-right: 0; margin-bottom: 6px; }
.stub .stub-search { height: 25px; margin-bottom: 38px; }

/* summary report */
.summary { min-height: 510px; }
.summary-left { flex: 1; min-width: 0; display: flex; flex-direction: column; }
.summary-main { flex: 1; }
.pane { background: #f3f2f1; flex: none; position: relative; border-left: 1px solid #e1dfdd; color: #323130; white-space: nowrap; border-bottom: 2px solid #e1dfdd; }
.pane header { display: flex; justify-content: space-between; align-items: center; height: 41px; padding: 0 9px; }
.pane h2 { font-size: 15px; color: #252423; }
.viz { width: 189px; }
.viz h3 { font-size: 11px; line-height: 14px; padding-left: 9px; }
.modes { display: flex; gap: 37px; padding: 5px 0 4px 9px; }
.modes button { width: 34px; height: 34px; display: grid; place-items: center; border-radius: 2px; }
.modes .on { background: #d2d0ce; }
.modes svg { width: 34px; height: 34px; }
.modes button + button svg { width: 28px; height: 28px; }
.notch { width: 100%; height: 10px; }
.gallery { display: grid; grid-template-columns: repeat(6, 20px); gap: 9px; padding: 11px 0 0 11px; }
.gallery svg { width: 20px; height: 20px; overflow: visible; }
.gallery .k { fill: none; stroke: #484644; stroke-width: 1.2; }
.gallery .b { fill: #83bdeb; stroke: #1267b4; }
.gallery .g { fill: #c8c6c4; stroke: #797775; }
.gallery .w { fill: #fff; stroke: #484644; }
.viz-more { display: block; padding: 17px 0 3px 12px; }
.viz-more svg { width: 16px; height: 4px; }
.viz-fields { border-top: 1px solid #e1dfdd; margin-top: 14px; padding: 1px 6px 0 4px; position: relative; font-size: 11px; }
.drop { border: 1px dashed #c8c6c4; background: #fff; height: 25px; line-height: 18px; padding-left: 10px; }
.drop-b { height: 27px; line-height: 25px; padding-left: 8px; margin-top: 7px; }
.viz h4 { font-size: 12px; line-height: 16px; margin: 11px 0 4px 9px; }
.option { display: flex; justify-content: space-between; align-items: center; height: 27px; padding: 0 17px 0 9px; font-size: 12px; }
.switch { width: 34px; height: 17px; border: 1px solid #8a8886; border-radius: 9px; background: #fff; display: flex; align-items: center; justify-content: space-between; padding: 0 4px; font-size: 9px; }
.switch input { appearance: none; width: 9px; height: 9px; border-radius: 50%; background: #605e5c; }
.switch:has(:checked) { background: #117865; border-color: #117865; color: #fff; flex-direction: row-reverse; }
.switch input:checked { background: #fff; }
.viz-fields .thumb { position: absolute; right: 0; top: 31px; width: 6px; height: 118px; border-radius: 3px; background: #8a8886; }
.data { width: 187px; }
.data-search { display: flex; align-items: center; gap: 8px; height: 25px; margin: 6px 3px 3px 4px; padding-left: 12px; background: #fff; border: 1px solid #e1dfdd; border-bottom: 1px solid #8a8886; border-radius: 4px; color: #605e5c; }
.data-search svg { width: 15px; height: 15px; flex: none; }
.data-search input { border: 0; background: none; width: 100%; min-width: 0; padding: 0; font-size: 13px; }
.data-search input::placeholder { color: #605e5c; }
.fields { list-style: none; margin: 0; padding: 0; font-size: 12px; }
.fields li { display: flex; align-items: center; height: 25px; padding-left: 15px; }
.fields label, .fields .tbl { display: flex; align-items: center; }
.fields .arr { width: 8px; height: 8px; border: solid #605e5c; border-width: 0 1px 1px 0; transform: rotate(45deg); margin: -4px 7px 0 0; }
.fields .arr-r { transform: rotate(-45deg); width: 7px; height: 7px; margin: 0 8px 0 14px; }
.fields .tbl svg { width: 13px; height: 13px; margin-right: 6px; }
.fields input { appearance: none; width: 13px; height: 13px; border: 1px solid #a19f9d; border-radius: 2px; background: #f8f7f6; margin-right: 6px; }
.fields .leaf { padding-left: 45px; }
.fields .leaf svg, .fields .leaf .gap { width: 16px; height: 12px; margin-right: 4px; }
.fields .leaf .tree { height: 15px; }
.fields .deep { padding-left: 16px; }
.data .thumb { position: absolute; right: 3px; top: 230px; width: 8px; bottom: 8px; background: #8a8886; }
```

FILE: app.js
```js
const $ = id => document.getElementById(id);
const ico = n => `<svg aria-hidden="true"><use href="#i-${n}"/></svg>`;

/* ---------- ribbon ---------- */
const cmd = (icon, a, b = '', more = 0, off = 0) =>
  `<button class="cmd"${off ? ' disabled' : ''}>${ico(icon)}<span>${a}</span><span class="${more ? 'more' : ''}">${b || (more ? '' : '&nbsp;')}</span></button>`;
const edits = [['cut', 'Cut'], ['copy', 'Copy'], ['brush', 'Format painter']];
const minis = (list, off) => `<div class="minis">${list.map(([i, t]) => `<button class="mini"${off ? ' disabled' : ''}>${ico(i)}${t}</button>`).join('')}</div>`;
const insert2 = cmd('newvis', 'New', 'visual') + cmd('textbox', 'Text', 'box');
const groups = {
  clipboard: ['Clipboard', cmd('paste', 'Paste', '', 0, 1) + minis(edits.slice(1), true)],
  clipboardAll: ['Clipboard', minis(edits, true)],
  clipboardOn: ['Clipboard', minis(edits, false)],
  data: ['Data', cmd('get', 'Get', 'data', 1) + cmd('excel', 'Excel', 'workbook', 0, 1) + cmd('lake', 'OneLake', 'catalog', 1, 1) +
    cmd('sql', 'SQL', 'Server', 0, 1) + cmd('enter', 'Enter', 'data', 0, 1) + cmd('verse', 'Dataverse', '', 0, 1) + cmd('recent', 'Recent', 'sources', 1, 1)],
  queries: ['Queries', cmd('transform', 'Transform', 'data', 1) + cmd('refresh', 'Refresh')],
  insert: ['Insert', insert2],
  insert3: ['Insert', insert2 + cmd('more', 'More', 'visuals', 1)],
  calc: ['Calculations', cmd('calc', 'New visual', 'calculation', 1, 1) + cmd('measure', 'New', 'measure', 0, 1) + cmd('measure', 'Quick', 'measure', 0, 1)],
  sens: ['Sensitivity', cmd('sens', 'Sensitivity', '', 1, 1)],
  share: ['Share', cmd('publish', 'Publish')],
  copilot: ['Copilot', cmd('copilot', 'Copilot')]
};
document.querySelectorAll('.ribbon').forEach(r => {
  const names = r.dataset.groups.split(' ');
  r.innerHTML = names.map(n => `<div class="group g-${n}"><div class="group-items">${groups[n][1]}</div><div class="group-name">${groups[n][0]}</div></div>`).join('') +
    (names.includes('copilot') ? '<button class="fold" aria-label="Collapse ribbon"></button>' : '');
});

/* ---------- slicers ---------- */
document.querySelectorAll('.slicer').forEach(s => {
  s.innerHTML = `<legend>${s.dataset.slicer}</legend>` + s.dataset.values.split(' ')
    .map(v => `<label><input type="checkbox"${v === s.dataset.picked ? ' checked' : ''}>${v}</label>`).join('');
});

/* ---------- svg helpers ---------- */
const text = (x, y, t, o = {}) =>
  `<text x="${x}" y="${y}" font-size="${o.s || 8}" font-family="${o.f || 'Open Sans, sans-serif'}" font-weight="${o.w || 400}" fill="${o.c || '#605e5c'}" text-anchor="${o.a || 'start'}"${o.r ? ` transform="rotate(-90 ${x} ${y})"` : ''}>${t}</text>`;
const din = 'Roboto, sans-serif';
const title = (x, y, t, s = 11) => text(x, y, t, { s, f: din, w: 500, c: '#252423' });
const line = (x1, y1, x2, y2, c = '#dcdad8') => `<path d="M${x1} ${y1}L${x2} ${y2}" stroke="${c}" stroke-dasharray="1 3"/>`;
const rect = (x, y, w, h, c = '#118dff') => `<rect x="${x}" y="${y}" width="${w}" height="${h}" fill="${c}"/>`;

/* ---------- slicer report charts ---------- */
(() => {
  let s = title(130, 146, 'Price by Date Key');
  [179, 216].forEach(y => s += line(160, y, 445, y));
  [168, 246, 323, 402].forEach((x, i) => s += line(x, 160, x, 216) + text(x, 222, `20,180,3${i}0`, { a: 'middle' }));
  s += text(155, 179, '40K', { a: 'end' }) + text(155, 215, '20K', { a: 'end' }) + text(133, 188, 'Price', { a: 'middle', r: 1, s: 7, w: 600, c: '#252423' });
  const pts = '175,184 183,196 191,206 199,192 206,186 214,183 222,191 230,202 237,201 246,205 253,196 261,196 269,190 277,213 284,174 292,190 300,214 316,174 323,190 331,179 339,196 347,199 355,207 362,201 370,190 378,190 386,200 394,199 402,212 410,208';
  s += `<polyline points="${pts}" fill="none" stroke="#118dff" stroke-width="2"/>`;

  s += title(464, 146, 'Quantity by Product Category Name');
  const slices = [[957, '#d64550'], [806, '#b6a0ff'], [798, '#45474f'], [696, '#a9f311'], [647, '#0c3b35'], [446, '#0f3a5c'], [434, '#dcccbc'], [380, '#744ec2'],
    [353, '#7c4b55'], [287, '#ffb061'], [263, '#96690c'], [262, '#0090dc'], [253, '#1b2a5e'], [229, '#d9b300'], [225, '#fde188'], [205, '#243b8a'], [185, '#6b77b5'],
    [175, '#6b6459'], [165, '#1d9e88'], [130, '#a8978b'], [115, '#ff8787'], [90, '#5a5f66'], [80, '#c99b06'], [75, '#f5cf7a'], [65, '#9fb8e8'], [60, '#1f7d73'], [55, '#34509a'],
    [50, '#7a5a1d'], [47, '#a3432f'], [45, '#3b6fc4'], [42, '#7c3fa0'], [40, '#2f8f9c'], [38, '#4254c5'], [36, '#1a9fe8'], [34, '#b13a8c'], [30, '#2b2fa0'], [28, '#21c96a'], [26, '#155c50'], [24, '#e54ea0'],
    [22, '#3344aa'], [20, '#86c440'], [18, '#433'], [60, '#8c4a4f'], [38, '#5a4a52']];
  const total = slices.reduce((a, v) => a + v[0], 0);
  let ang = 0;
  const pt = a => `${(580.3 + 60 * Math.sin(a)).toFixed(2)} ${(237.7 - 60 * Math.cos(a)).toFixed(2)}`;
  slices.forEach(([v, c]) => {
    const end = ang + v / total * Math.PI * 2;
    s += `<path d="M580.3 237.7L${pt(ang)}A60 60 0 0 1 ${pt(end)}Z" fill="${c}"/>`;
    ang = end;
  });
  [[561, 165, '9'], [507, 175, '47 (0.53%)(0.1%)'], [486, 187, '128 (1.46%)'], [500, 198, '175'], [487, 209, '(1.99%)'], [473, 221, '225 (2...)'], [471, 232, '229 (2...)'], [471, 243, '253 (2...)'],
    [473, 255, '262 (2...)'], [477, 267, '263 (2...)'], [480, 278, '287 (3.2...)'], [488, 292, '353 (4.01%)'], [521, 305, '434 (4.93%)'], [613, 175, '957 (10.88%)'], [640, 187, '806'], [640, 197, '(9.16%)'],
    [657, 221, '798'], [657, 232, '(9.07%)'], [645, 273, '696'], [645, 283, '(7.91%)'], [628, 294, '647 (7.36%)'], [598, 305, '446 (5.07%)']]
    .forEach(l => s += text(l[0], l[1], l[2]));
  s += '<path d="M600 180l3-5h7M625 197l5-6h8M640 227l13-1M630 273l3 5h9M613 290l4 4h8M587 299l1 6h8M573 299l-1 6h-8M543 286l-6 6h-6M530 273l-6 5h-8M525 264l-5 3h-10M522 254h-14M518 243h-14M520 232h-14M519 221l-5-1h-7M529 206l-5-3h-9M540 190l-5-4h-7M576 176v-6h-9" fill="none" stroke="#b3b0ad"/>';
  s += text(695, 162, 'Product Category Name', { s: 9, w: 600, c: '#484644' });
  [['bed_bath_table', '#d64550'], ['computers_accessor...', '#b6a0ff'], ['sports_leisure', '#45474f'], ['health_beauty', '#a9f311'], ['furniture_decor', '#0c3b35'], ['watches_gifts', '#0f3a5c'], ['housewares', '#dcccbc'], ['auto', '#744ec2']]
    .forEach(([t, c], i) => { const y = 176 + Math.round(i * 16.5); s += `<circle cx="699" cy="${y}" r="3.500" fill="${c}"/>` + text(704, y, t, { s: 9 }); });
  s += '<path d="M742 313h6l-3 4z" fill="#252423"/>';

  s += title(128, 352, 'Quantity by Order Item Key');
  ['0.00001M', '0.00001M', '0.00000M'].forEach((t, i) => { const y = [368, 455, 542][i]; s += line(183, y, 784, y) + text(177, y, t, { a: 'end', f: din }); });
  for (let i = 0; i < 7; i++) { const x = 183 + i * 100; s += line(x, 368, x, 542) + text(x, 549, i * 20 + 'K', { a: 'middle', f: din }); }
  s += text(483, 562, 'Order Item Key', { s: 9, f: din, w: 500, a: 'middle', c: '#252423' }) + text(133, 455, 'Quantity', { s: 8, w: 600, a: 'middle', r: 1, c: '#252423' });
  const spikes = {
    9: [612], 6: [216, 222, 233, 266, 273, 288, 293, 384, 459, 492, 503, 535], 5: [193, 239, 303, 365, 428, 461, 477, 596, 597, 685],
    4: [316, 340, 349, 421, 463, 485, 510, 519, 554, 562, 588, 725],
    3: [246, 265, 276, 361, 363, 365, 375, 392, 405, 408, 415, 440, 447, 449, 467, 469, 479, 506, 508, 521, 541, 574, 580, 600, 620, 626, 629, 671, 677],
    2: []
  };
  let seed = 7;
  const rnd = () => (seed = seed * 16807 % 2147483647) / 2147483647;
  [[184, 203, 14], [210, 266, 36], [273, 310, 28], [324, 364, 30], [370, 420, 36], [428, 466, 24], [468, 500, 34], [503, 521, 10], [530, 567, 22], [573, 604, 24], [611, 635, 20], [648, 737, 60]]
    .forEach(([a, b, n]) => { for (let i = 0; i < n; i++) spikes[2].push(Math.round(a + rnd() * (b - a))); });
  Object.entries(spikes).forEach(([n, xs]) => xs.forEach(x => s += rect(x, Math.round(542 - n * 17.5), 1, 20 + (n - 1) * 16, n > 4 ? '#4aa8ff' : '#5cb0ff')));
  s += rect(183, 524, 558, 19);
  $('slicer-charts').innerHTML = s;
})();

/* ---------- quarter chart ---------- */
(() => {
  let s = '<path d="M799 779.500H1303.500V1034H799z" fill="none" stroke="#c8c6c4" stroke-width="2"/>';
  s += '<path d="M798 778h8v3h-5v5h-3zM1305 778h-8v3h5v5h3zM798 1036h8v-3h-5v-5h-3zM1305 1036h-8v-3h5v-5h3zM1046 778h10v3h-10zM1046 1033h10v3h-10zM798 893h3v10h-3zM1302 893h3v10h-3z" fill="#979593"/>';
  s += title(801, 783, 'Payment Value by Year and Quarter', 7);
  [[817, 4], [864, 3], [912, 2], [959, 1], [1006, 0]].forEach(([y, n]) => s += line(823, y, 1300, y, '#e1dfdd') + text(819, y, n + 'M', { s: 6, a: 'end' }));
  s += rect(875, 828, 101, 178) + rect(1008, 812, 101, 194) + rect(1141, 884, 101, 122);
  [[929, 1], [1062, 2], [1195, 3]].forEach(([x, n]) => s += text(x, 1011, n, { s: 6, a: 'middle' }));
  s += text(1062, 1019, '2018', { s: 6, a: 'middle' }) + text(1062, 1028, 'Quarter', { s: 6, w: 600, a: 'middle', c: '#252423' }) + text(804, 900, 'Payment Value', { s: 6, w: 500, a: 'middle', r: 1, f: din, c: '#252423' });
  s += line(863, 1008, 863, 1024, '#c8c6c4') + line(1262, 1008, 1262, 1024, '#c8c6c4');
  $('quarter-chart').innerHTML = s;
})();

/* ---------- category chart ---------- */
(() => {
  const rows = [['health_beauty', 467], ['watches_gifts', 456], ['bed_bath_table', 419], ['sports_leisure', 358], ['computers_accessories', 326], ['furniture_decor', 265], ['cool_stuff', 236], ['housewares', 224], ['auto', 219], ['toys', 186], ['garden_tools', 170], ['baby', 157], ['perfumery', 148], ['telephony', 116], ['stationery', 89], ['office_furniture', 85], ['Unknown', 83], ['pet_shop', 80], ['computers', 77], ['musical_instruments', 70], ['small_appliances', 69], ['fashion_bags_accessories', 63], ['consoles_games', 57], ['electronics', 57], ['construction_tools_construction', 56], ['luggage_accessories', 53], ['home_appliances_2', 42], ['home_construction', 31], ['home_appliances', 30]];
  let s = title(62, 1279, 'Price by Product Category Name', 9);
  for (let i = 0; i < 8; i++) { const x = 206 + Math.round(i * 74.25); s += line(x, 1292, x, 1626) + text(x, 1635, (i * .2).toFixed(1) + 'M', { s: 7, a: 'middle' }); }
  rows.forEach(([t, w], i) => { const y = 1296 + Math.round(i * 11.37); s += rect(206, y, w, 9) + text(201, y + 5, t, { s: 7, a: 'end', f: din }); });
  s += text(466, 1645, 'Price', { s: 8, w: 500, f: din, a: 'middle', c: '#252423' }) + text(67, 1460, 'Product Category Name', { s: 8, w: 500, f: din, a: 'middle', r: 1, c: '#252423' });
  s += rect(733, 1292, 5, 336, '#f3f2f1') + rect(733, 1292, 5, 136, '#c8c6c4');
  s += '<path d="M43 1664H748" stroke="#444" stroke-width="2" stroke-dasharray="2 2"/>';
  $('category-chart').innerHTML = s;
})();

/* ---------- tables ---------- */
$('cities').tBodies[0].innerHTML = `abaete,13310,SP;abelardo luz,15864,SP;abelardo luz,26637,SP;abre campo,15987,SP;acucena,21236,SP;adamantina,8181,SP;adamantina,32671,SP;afogados da ingazeira,14585,SP;afonso claudio,6507,SP;agisse,18915,SP;agua doce do norte,9821,MG;aguas claras,10659,SP;aguas da prata,16405,SP;aguas de sao pedro,16946,PR;aguas lindas de goias,62,PR;aguas lindas de goias,26936,SP;aguas vermelhas,17206,SP;agudos,28538,SP;aimores,14073,SP;aiuruoca,18915,SP;ajuricaba,24644,RS;alagoinhas,30139,SP;alegrete,839,RJ;alem paraiba,6778,PR;alexandria,13151,PB;alfenas,1264,SP;alfenas,25669,RJ;almenara,4606,SP`
  .split(';').map(r => `<tr>${r.split(',').map(c => `<td>${c}</td>`).join('')}</tr>`).join('');

function matrix(id, key, widths, cats, rows, plus) {
  const body = rows.map(r => {
    const c = r.split('|'), total = c[0] === 'Total';
    const lead = plus ? (total ? '<span class="indent"></span>' : '<span class="plus"></span>') : '';
    return `<tr${total ? ' class="total"' : ''}><th scope="row">${lead}${c[0]}</th>${c.slice(1).map((v, i) => `<td${i > 7 ? ' class="strong"' : ''}>${v}</td>`).join('')}</tr>`;
  }).join('');
  $(id).innerHTML = `<colgroup>${widths.map(w => `<col style="width:${w}px">`).join('')}</colgroup><thead><tr><th>Product Category Name</th>` +
    cats.map((c, i) => `<th colspan="2"${i === 4 ? ' class="strong"' : ''}>${c}</th>`).join('') + `</tr><tr><th>${key}</th>` +
    cats.map((c, i) => ['Quantity', 'Price'].map(h => `<th${i === 4 ? ' class="strong"' : ''}>${h}</th>`).join('')).join('') + `</tr></thead><tbody>${body}</tbody>`;
}
matrix('m-seller', 'Seller Key', [87, 36, 33, 36, 32, 36, 32, 36, 36, 38, 37], ['air_conditioning', 'auto', 'baby', 'bed_bath_table', 'Total'], [
  '6|||||||166|17,447.07|166|17,447.07', '10|||||||167|16,376.00|167|16,376.00', '16|||||16|905.80|||16|905.80', '19|||||||42|4,938.73|42|4,938.73',
  '22|20|1,321.29|||3|415.23|1|125.90|24|1,862.42', '24|||||2|26.00|||2|26.00', '31|||||4|522.64|||4|522.64', '45|||4|479.60|||||4|479.60', '46|||13|1,859.10|||||13|1,859.10',
  'Total|20|1,321.29|17|2,338.70|25|1,869.67|376|38,887.70|438|44,417.36'], true);
matrix('m-customer', 'Customer Key', [87, 36, 33, 36, 32, 36, 32, 36, 23, 38, 32], ['air_conditioning', 'auto', 'baby', 'dvds_blu_ray', 'Total'], [
  '7636|||1|62.70|||||1|62.70', '7985|||||1|69.00|||1|69.00', '9968|1|59.90|||||||1|59.90', '15014|||||1|129.00|||1|129.00', '15469|1|169.89|||||||1|169.89',
  '16519|||||1|129.00|||1|129.00', '19827|||||||1|8.89|1|8.89', '20281|1|59.90|||||||1|59.90', '21643|2|59.90|||||||2|59.90', '29011|1|59.90|||||||1|59.90',
  'Total|20|1,321.29|17|2,338.70|25|1,869.67|4|35.56|66|5,565.22'], false);

/* ---------- visual gallery ---------- */
const ax = '<path class="k" d="M1 0v19h19"/>';
const R = (c, x, y, w, h) => `<rect class="${c}" x="${x}" y="${y}" width="${w}" height="${h}"/>`;
$('gallery').innerHTML = [
  ax + R('g', 1, 2, 5, 4) + R('b', 6, 2, 7, 4) + R('w', 1, 11, 9, 4) + R('g', 10, 11, 7, 4),
  ax + R('b', 4, 5, 5, 8) + R('w', 4, 13, 5, 6) + R('g', 12, 2, 5, 8) + R('w', 12, 10, 5, 9),
  ax + R('b', 1, 1, 18, 4) + R('g', 1, 5, 7, 4) + R('w', 1, 11, 12, 3) + R('g', 1, 14, 16, 3),
  ax + R('b', 3, 2, 5, 17) + R('w', 8, 8, 4, 11) + R('g', 12, 11, 3, 8) + R('w', 15, 6, 4, 13),
  ax + R('b', 1, 2, 17, 4) + R('w', 1, 11, 10, 4) + R('g', 11, 11, 7, 4),
  ax + R('b', 4, 2, 5, 12) + R('w', 4, 14, 5, 5) + R('g', 13, 2, 5, 6) + R('w', 13, 8, 5, 11),
  ax + '<path class="k" d="M1 13l5-5 4 3 5-6 5 2"/><path d="M1 9l5 3 5-6 4 3 5-4" fill="none" stroke="#1267b4"/>',
  '<path class="g" d="M9 19L16 1l4 6v12z"/><path class="w" d="M1 19L7 3l5 8z"/><path class="b" d="M1 18l8-6 3-2 8 8v1H1z"/>',
  ax + '<path class="b" d="M1 5l5 3 5-4 4 3 5-4v8l-5 3-4-4-5 4-5-4z"/>',
  ax + '<path class="b" d="M1 2h18v13l-4-4-4 4-5-4-5 4z"/>',
  ax + R('w', 3, 9, 5, 10) + R('b', 4, 2, 4, 9) + R('g', 13, 1, 5, 10) + R('w', 13, 11, 5, 8) + '<path class="k" d="M1 16l6-3 5 2 8-8"/>',
  ax + R('b', 3, 9, 5, 10) + R('w', 8, 1, 4, 18) + R('g', 13, 5, 5, 14) + '<path class="k" d="M1 15l6-4 5 2 8-6"/>',
  ax + '<path d="M2 12c4-8 5 5 9 3s4-8 8-6v7c-4 3-6 1-9 1s-5 1-8 0z" fill="#f0a04b" stroke="#d0700c"/><path class="g" d="M2 4l5 4 5-3 7-2v5c-5 3-9 5-17 1z"/><path class="b" d="M2 8c6-1 6 7 10 6s3-8 7-8v4c-4 1-4 7-8 8s-4-6-9-5z"/>',
  ax + R('g', 4, 2, 4, 16) + R('w', 8, 5, 4, 14) + R('b', 11, 3, 4, 7) + R('g', 15, 1, 4, 17),
  R('b', 0, 2, 20, 5) + R('b', 3, 7, 14, 6) + R('b', 6, 13, 8, 4),
  ax + '<path d="M4 13h3v3H4zM15 1h3v3h-3z" fill="#252423"/><path d="M5 5h3v3H5zM10 8h3v3h-3zM15 12h3v3h-3z" fill="#5ba7e2"/>',
  '<circle class="w" cx="10" cy="10" r="9.300"/><path class="b" d="M10 .7a9.300 9.300 0 0 1 7 15.500L10 10z"/>',
  '<circle cx="10" cy="10" r="7" fill="none" stroke="#1267b4" stroke-width="6"/><circle cx="10" cy="10" r="7" fill="none" stroke="#83bdeb" stroke-width="4.400"/><path d="M4 8A6.500 6.500 0 0 1 10 3" fill="none" stroke="#fff" stroke-width="4"/>',
  R('w', 1, 1, 18, 18) + R('b', 1, 1, 8, 9) + R('b', 1, 10, 8, 9) + '<path class="k" d="M9 7h10M14 7v12M9 13h5"/>',
  '<circle class="w" cx="10" cy="8" r="6.500"/><path d="M6 4l4-1 2 4-4 4zM11 9l4-3-1 5z" fill="#2f8f46"/><path class="k" d="M15 1c5 5 1 14-7 14M10 15v4M5 19h10"/>',
  '<path class="g" d="M1 3l6 1 5 1 7-3-1 8-5 8-7-1-5-7z"/><path class="b" d="M1 2l5 1 2 7-4 2-3-3zM12 9l6-1-1 6-5 2z"/>',
  '<path d="M13 0l6 19-6-5-10 5z" fill="#2488d0"/><path d="M13 0v14L3 19z" fill="#56c0e8"/>',
  '<path class="b" d="M1 14a9 9 0 0 1 18 0h-5a4 4 0 0 0-8 0z"/><path class="k" d="M10 14l5-7"/><path d="M1 14a9 9 0 0 1 4-7l4 4a4 4 0 0 0-3 3z" fill="#fff" stroke="#484644"/>',
  R('w', 0, 2, 20, 15) + '<text x="10" y="13" font-size="9" text-anchor="middle" fill="#2488d0">123</text>',
  R('w', 1, 1, 18, 18) + '<path d="M4 3v14" stroke="#484644"/><path d="M6 6h9M6 10h6M6 14h9" stroke="#2488d0" stroke-width="2"/>',
  R('w', 0, 2, 20, 15) + '<path d="M3 11l3-6 3 6z" fill="#4aa564"/><path d="M11 5h6l-3 6z" fill="#e0383c"/><path class="k" d="M3 14h6M11 14h6"/>',
  R('w', 1, 1, 18, 17) + '<path d="M1 3h18" stroke="#b3b0ad" stroke-width="3"/>' + R('g', 4, 8, 3, 3) + R('g', 4, 13, 3, 3) + '<path class="w" d="M9 10h11l-4 5v5l-3-1v-4z"/>',
  R('w', 1, 1, 18, 18) + '<path d="M1 3h18" stroke="#b3b0ad" stroke-width="3"/><path class="k" d="M1 7h18M1 13h18M7 5v14M13 5v14"/>',
  R('w', 1, 1, 18, 18) + R('b', 13, 1, 6, 18) + R('b', 7, 13, 12, 6) + '<path class="k" d="M1 7h18M1 13h18M7 1v18M13 1v18"/>',
  '<text x="9" y="16" font-size="17" font-weight="700" text-anchor="middle" fill="#2488d0">R</text>',
  '<text x="10" y="15" font-size="16" font-weight="700" text-anchor="middle" fill="#2488d0">Py</text>',
  ax + '<path class="k" d="M1 5h13M1 10h8M1 15h12"/><circle class="b" cx="16" cy="4" r="2.500"/><circle class="g" cx="11" cy="10" r="2"/>',
  R('b', 0, 7, 7, 5) + R('b', 12, 0, 7, 5) + R('b', 12, 7, 7, 5) + R('b', 12, 14, 7, 5) + '<path class="k" d="M7 9h5M9 3v13M9 3h3M9 16h3"/>',
  '<path d="M1 2h18v12h-9l-4 4v-4H1z" fill="#fff" stroke="#1267b4"/>',
  '<path class="w" d="M5 1h9l4 4v14H5z"/><circle class="b" cx="3" cy="8" r="2.500"/><path d="M8 10h5M7 14h8" stroke="#2488d0" stroke-width="1.500"/>',
  '<path class="g" d="M5 1h10v7c-1 4-9 4-10 0z"/><path class="k" d="M5 3H1c0 4 2 6 5 6M15 3h4c0 4-2 6-5 6M10 11v5"/><path class="b" d="M6 15h8v4H6z"/>',
  '<path class="w" d="M3 1h9l5 5v13H3z"/><path d="M6 12h2v5H6zM9 14h2v3H9zM12 11h2v6h-2z" fill="#252423"/>',
  R('w', 1, 4, 18, 13) + '<text x="12" y="14" font-size="8" text-anchor="middle" fill="#2488d0">123</text><path d="M3-1h5L6 4h3l-8 8 2-6H0z" fill="#f0903a"/>',
  R('w', 9, 1, 8, 7) + R('g', 2, 11, 7, 7) + '<path class="w" d="M10 10h10l-4 4v5l-3-1v-4z"/><path d="M3-1h5L6 4h3l-8 8 2-6H0z" fill="#f0903a"/>',
  '<path class="w" d="M2 2h17v17H2z"/><path class="b" d="M9 2h10v9l-4 2v4h-5l-4 2H2v-6l6-2z"/><path d="M0 0h6v6l-3 5-3-5z" fill="#e06c10"/><circle cx="17" cy="16" r="3" fill="#e06c10"/>',
  '<path d="M10 1l9 9-9 9-9-9zM5.500 5.500l9 9M14.500 5.500l-9 9" fill="none" stroke="#a13fae" stroke-width="1.400"/>',
  '<path d="M1 3h12l6 7-6 7H1l5-4h4l3-3-3-3H6zM10 7l-9 10" fill="#fff" stroke="#2488e8" stroke-width="1.300"/>'
].map(g => `<svg viewBox="0 0 20 20" aria-hidden="true">${g}</svg>`).join('');

/* ---------- field list ---------- */
$('fields').innerHTML = ['k:Customer Key', 'n:Customer State', 't:Dim Date', 'h:Date Hierarchy', 'k:Date Key', 'n:Month', 'n:Quarter', 'n:Year', 't:Dim Product', 'n:Product Categ...', 'k:Product Key', 't:Dim Seller', 'n:Seller City', 'k:Seller Key', 'n:Seller State', 't:Fact Order Items', 'k:Order Item Key'].map(f => {
  const [k, t] = f.split(':');
  if (k === 't') return `<li><span class="tbl"><i class="arr"></i>${ico('table')}${t}</span></li>`;
  const mark = k === 'k' ? ico('card') : k === 'h' ? '<svg class="tree" aria-hidden="true"><use href="#i-tree"/></svg>' : '<i class="gap"></i>';
  return `<li class="leaf${k === 'h' ? ' deep' : ''}">${k === 'h' ? '<i class="arr arr-r"></i>' : ''}<label><input type="checkbox">${mark}${t}</label></li>`;
}).join('');
```
